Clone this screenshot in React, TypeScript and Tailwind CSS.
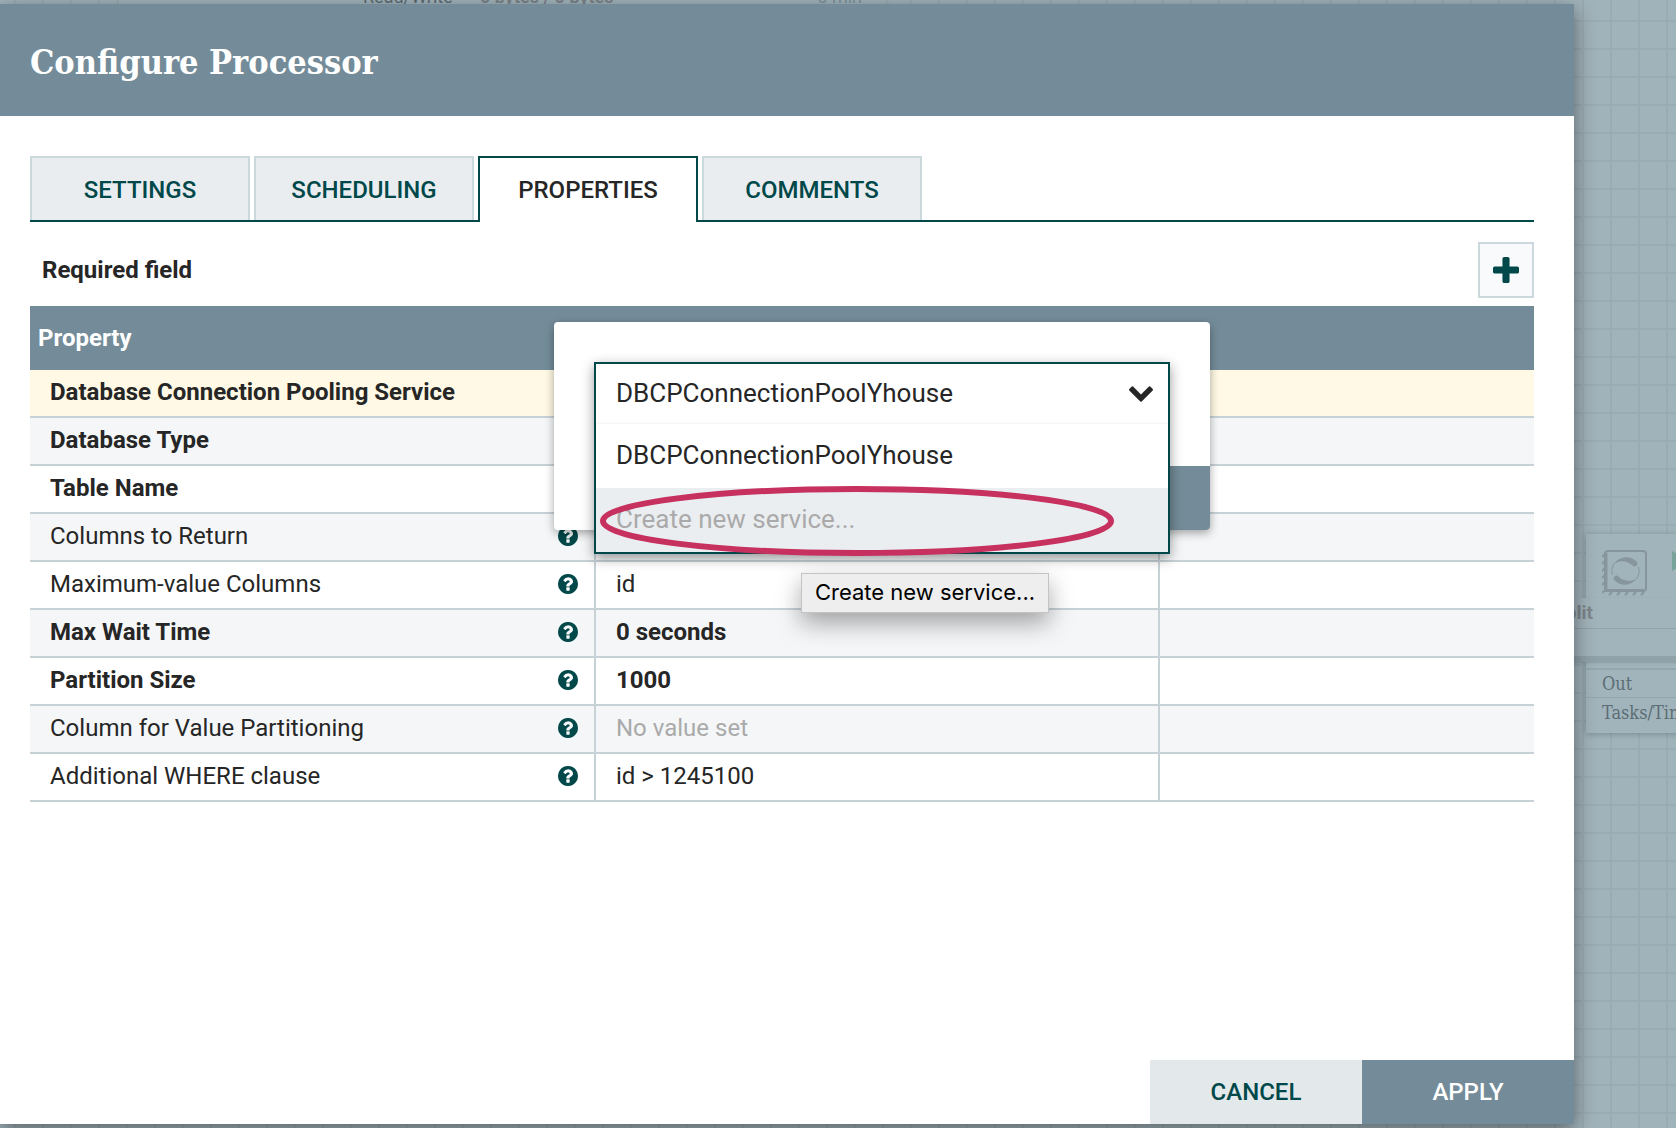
import React from "react";

type Row = {
  name: string;
  value?: string;
  required?: boolean;
  unset?: boolean;
};

const rows: Row[] = [
  { name: "Database Connection Pooling Service", required: true },
  { name: "Database Type", required: true },
  { name: "Table Name", required: true },
  { name: "Columns to Return" },
  { name: "Maximum-value Columns", value: "id" },
  { name: "Max Wait Time", value: "0 seconds", required: true },
  { name: "Partition Size", value: "1000", required: true },
  { name: "Column for Value Partitioning", value: "No value set", unset: true },
  { name: "Additional WHERE clause", value: "id > 1245100" },
];

const tabs = ["SETTINGS", "SCHEDULING", "PROPERTIES", "COMMENTS"];

function HelpIcon() {
  return (
    <svg viewBox="128 128 1536 1536" className="size-5 shrink-0 fill-[#004849]" aria-hidden="true">
      <path d="M1024 1376v-192q0-14-9-23t-23-9h-192q-14 0-23 9t-9 23v192q0 14 9 23t23 9h192q14 0 23-9t9-23zm256-672q0-88-55.5-163t-138.5-116-170-41q-243 0-371 213-15 24 8 42l132 100q7 6 19 6 16 0 25-12 53-68 86-92 34-24 86-24 48 0 85.5 26t37.5 59q0 38-20 61t-68 45q-63 28-115.5 86.5t-52.5 125.5v36q0 14 9 23t23 9h192q14 0 23-9t9-23q0-19 21.5-49.5t54.5-49.5q32-18 49-28.5t46-35 44.5-48 28-60.5 12.5-81zm384 192q0 209-103 385.5t-279.5 279.5-385.5 103-385.5-103-279.5-279.5-103-385.5 103-385.5 279.5-279.5 385.5-103 385.5 103 279.5 279.5 103 385.5z" />
    </svg>
  );
}

function PlusIcon() {
  return (
    <svg viewBox="192 128 1408 1408" className="size-[26px] fill-[#004849]" aria-hidden="true">
      <path d="M1600 736v192q0 40-28 68t-68 28h-416v416q0 40-28 68t-68 28h-192q-40 0-68-28t-28-68v-416h-416q-40 0-68-28t-28-68v-192q0-40 28-68t68-28h416v-416q0-40 28-68t68-28h192q40 0 68 28t28 68v416h416q40 0 68 28t28 68z" />
    </svg>
  );
}

function ChevronIcon() {
  return (
    <svg viewBox="90 533 1612 1035" className="h-4 w-6 fill-[#262626]" aria-hidden="true">
      <path d="M1683 808l-742 741q-19 19-45 19t-45-19l-742-741q-19-19-19-45.5t19-45.5l166-165q19-19 45-19t45 19l531 531 531-531q19-19 45-19t45 19l166 165q19 19 19 45.5t-19 45.5z" />
    </svg>
  );
}

function ProcessorIcon() {
  return (
    <svg viewBox="0 0 46 48" className="h-12 w-[46px]" fill="none" stroke="#87959c" aria-hidden="true">
      <rect x="3" y="2" width="41" height="40" rx="3" strokeWidth="2" />
      <path d="M4 4v37.500h38" strokeWidth="3" />
      <path
        d="M3 5L0 8M3 12l-3 3M3 19l-3 3M3 26l-3 3M3 33l-3 3M3 41l-3 3M10 43l-3 3M18 43l-3 3M26 43l-3 3M34 43l-3 3M42 43l-3 3"
        strokeWidth="2"
      />
      <path d="M10.500 26A13.500 13.500 0 0 1 12.500 14" strokeWidth="1" />
      <path d="M36.500 18A13.500 13.500 0 0 1 34.500 30" strokeWidth="1" />
      <path
        d="M12 15C17 7 28 6 34.500 12.500a2.600 2.600 0 0 1-4 4C25 11 17 11 12 15zM35 29C30 37 19 38 12.500 31.500a2.600 2.600 0 0 1 4-4C22 33 30 33 35 29z"
        fill="#87959c"
        stroke="none"
      />
    </svg>
  );
}

function CanvasNodes() {
  return (
    <div className="pointer-events-none absolute inset-0 overflow-hidden text-[19px]" aria-hidden="true">
      <div className="absolute -top-6 left-[119px] flex h-[34px] w-[767px] items-end bg-[#a2b4bb] pb-px pl-[244px] text-lg leading-6 shadow-md">
        <span className="w-[117px] text-[#5b6d75]">Read/Write</span>
        <span className="font-bold text-[#7d858b]">0 bytes / 0 bytes</span>
        <span className="ml-auto pr-6 text-[#7c94a1]">5 min</span>
      </div>
      <div className="absolute -right-60 top-[534px] h-[199px] w-[330px] bg-[#a2b4bb] font-['DejaVu_Serif_Condensed','DejaVu_Serif',serif] text-lg text-[#5b6d75] shadow-[0_1px_6px_rgba(60,80,90,0.4)]">
        <div className="flex h-[134px] gap-6 pl-4 pt-[15px]">
          <ProcessorIcon />
          <svg viewBox="0 0 18 20" className="mt-0.5 h-5 w-[18px] fill-[#77a39a]">
            <path d="M0 0l18 10L0 20z" />
          </svg>
        </div>
        <div className="flex h-[30px] items-center border-b border-t-2 border-b-[#94a6ae] border-t-[#93a7af] pl-4">Out</div>
        <div className="flex h-[30px] items-center pl-4">Tasks/Time</div>
      </div>
      <div className="absolute -right-40 top-[598px] h-16 w-[300px] border-b-[6px] border-[#90a2a9] bg-[#a2b4bb] shadow-sm">
        <div className="flex h-[31px] items-center border-b border-[#90a4ac] pl-5 font-bold text-[#7d858b]">split</div>
      </div>
    </div>
  );
}

function ServiceEditor() {
  return (
    <div className="absolute left-[524px] top-4 flex h-52 w-[656px] flex-col justify-end rounded bg-white shadow-[0_3px_10px_rgba(0,0,0,0.35)]">
      <button type="button" className="h-16 w-[212px] self-end rounded-br bg-[#748c99] text-2xl font-medium text-white">
        OK
      </button>
      <div className="absolute inset-x-10 top-10 border-2 border-[#004849] bg-white text-[26px] leading-8 text-[#262626] shadow-[0_4px_12px_rgba(0,0,0,0.4)]">
        <button
          type="button"
          aria-haspopup="listbox"
          aria-expanded="true"
          className="flex h-[60px] w-full items-center justify-between pl-5 pr-[15px]"
        >
          <span className="pb-0.5">DBCPConnectionPoolYhouse</span>
          <ChevronIcon />
        </button>
        <ul role="listbox" aria-label="Controller services" className="shadow-[0_-1px_2px_rgba(0,0,0,0.05)]">
          <li role="option" aria-selected="true" className="flex h-16 items-center pb-0.5 pl-5">
            DBCPConnectionPoolYhouse
          </li>
          <li role="option" aria-selected="false" className="flex h-16 items-center bg-[#eaeef0] pb-0.5 pl-5 text-[#aaaaaa]">
            Create new service...
          </li>
        </ul>
        <svg viewBox="0 0 514 72" className="absolute left-1 top-[121px] h-[72px] w-[514px]" fill="none" aria-hidden="true">
          <ellipse cx="257" cy="36" rx="254" ry="32" stroke="#c6315f" strokeWidth="6" />
        </svg>
      </div>
      <div
        role="tooltip"
        className="absolute left-[247px] top-[251px] flex h-10 w-[248px] items-center justify-center border border-[#c4c4c4] bg-[#eeeeee] pb-0.5 font-['Inter',sans-serif] text-[22px] text-black shadow-[0_10px_24px_rgba(0,0,0,0.35)]"
      >
        Create new service...
      </div>
    </div>
  );
}

export default function App() {
  return (
    <div className="relative flex min-h-screen flex-col bg-[#a1b3ba] bg-[linear-gradient(to_right,#9aacb3_2px,transparent_2px),linear-gradient(to_bottom,#9aacb3_2px,transparent_2px)] bg-[length:28px_28px] bg-[position:14px_20px] py-1 pr-[102px] font-['Roboto',sans-serif] text-[#262626]">
      <CanvasNodes />
      <main
        role="dialog"
        aria-labelledby="dialog-title"
        className="relative flex flex-1 flex-col bg-white shadow-[0_6px_20px_rgba(0,0,0,0.45)]"
      >
        <header className="flex h-28 items-center bg-[#748c99] px-[30px] pt-1">
          <h1
            id="dialog-title"
            className="font-['DejaVu_Serif_Condensed','DejaVu_Serif',serif] text-[34px] font-bold text-white"
          >
            Configure Processor
          </h1>
        </header>

        <div className="flex flex-1 flex-col pl-[30px] pr-10 pt-10">
          <div role="tablist" className="flex gap-1 border-b-2 border-[#004849]">
            {tabs.map((tab) => (
              <button
                key={tab}
                type="button"
                role="tab"
                aria-selected={tab === "PROPERTIES"}
                className={
                  tab === "PROPERTIES"
                    ? "-mb-0.5 h-[66px] w-[220px] border-2 border-b-0 border-[#004849] bg-white text-2xl font-medium"
                    : "h-16 w-[220px] border-2 border-b-0 border-[#cbd9dc] bg-[#e9edf0] pt-0.5 text-2xl font-medium text-[#004849]"
                }
              >
                {tab}
              </button>
            ))}
          </div>

          <div className="mb-2 mt-5 flex items-center justify-between pl-3">
            <span className="text-2xl font-bold">Required field</span>
            <button
              type="button"
              aria-label="New property"
              className="flex size-14 items-center justify-center border-2 border-[#cbd9dc] bg-[#f9fafc]"
            >
              <PlusIcon />
            </button>
          </div>

          <div className="relative">
            <table className="w-full table-fixed border-separate border-spacing-0 text-left text-2xl">
              <colgroup>
                <col className="w-[566px]" />
                <col className="w-[564px]" />
                <col />
              </colgroup>
              <thead>
                <tr className="h-16 bg-[#748c99] text-white">
                  <th scope="col" className="pl-2 font-bold">
                    Property
                  </th>
                  <th scope="col" aria-label="Value" />
                  <th scope="col" aria-label="Actions" />
                </tr>
              </thead>
              <tbody>
                {rows.map((row, i) => (
                  <tr
                    key={row.name}
                    className={i === 0 ? "bg-[#fff9e5]" : i % 2 ? "bg-[#f4f6f8]" : "bg-white"}
                  >
                    <td className="h-12 border-b-2 border-r-2 border-[#c7d2d7] p-0">
                      <div className="flex items-center justify-between pb-0.5 pl-5 pr-4">
                        <span className={row.required ? "font-bold" : ""}>{row.name}</span>
                        <HelpIcon />
                      </div>
                    </td>
                    <td
                      className={
                        "h-12 border-b-2 border-r-2 border-[#c7d2d7] p-0 pb-0.5 pl-5 " +
                        (row.required ? "font-bold " : "") +
                        (row.unset ? "text-[#aaaaaa]" : "")
                      }
                    >
                      {row.value}
                    </td>
                    <td className="h-12 border-b-2 border-[#c7d2d7] p-0" />
                  </tr>
                ))}
              </tbody>
            </table>
            <ServiceEditor />
          </div>
        </div>

        <footer className="flex justify-end">
          <button type="button" className="h-16 w-[212px] bg-[#e3e8eb] text-2xl font-medium text-[#004849]">
            CANCEL
          </button>
          <button type="button" className="h-16 w-[212px] bg-[#748c99] text-2xl font-medium text-white">
            APPLY
          </button>
        </footer>
      </main>
    </div>
  );
}
